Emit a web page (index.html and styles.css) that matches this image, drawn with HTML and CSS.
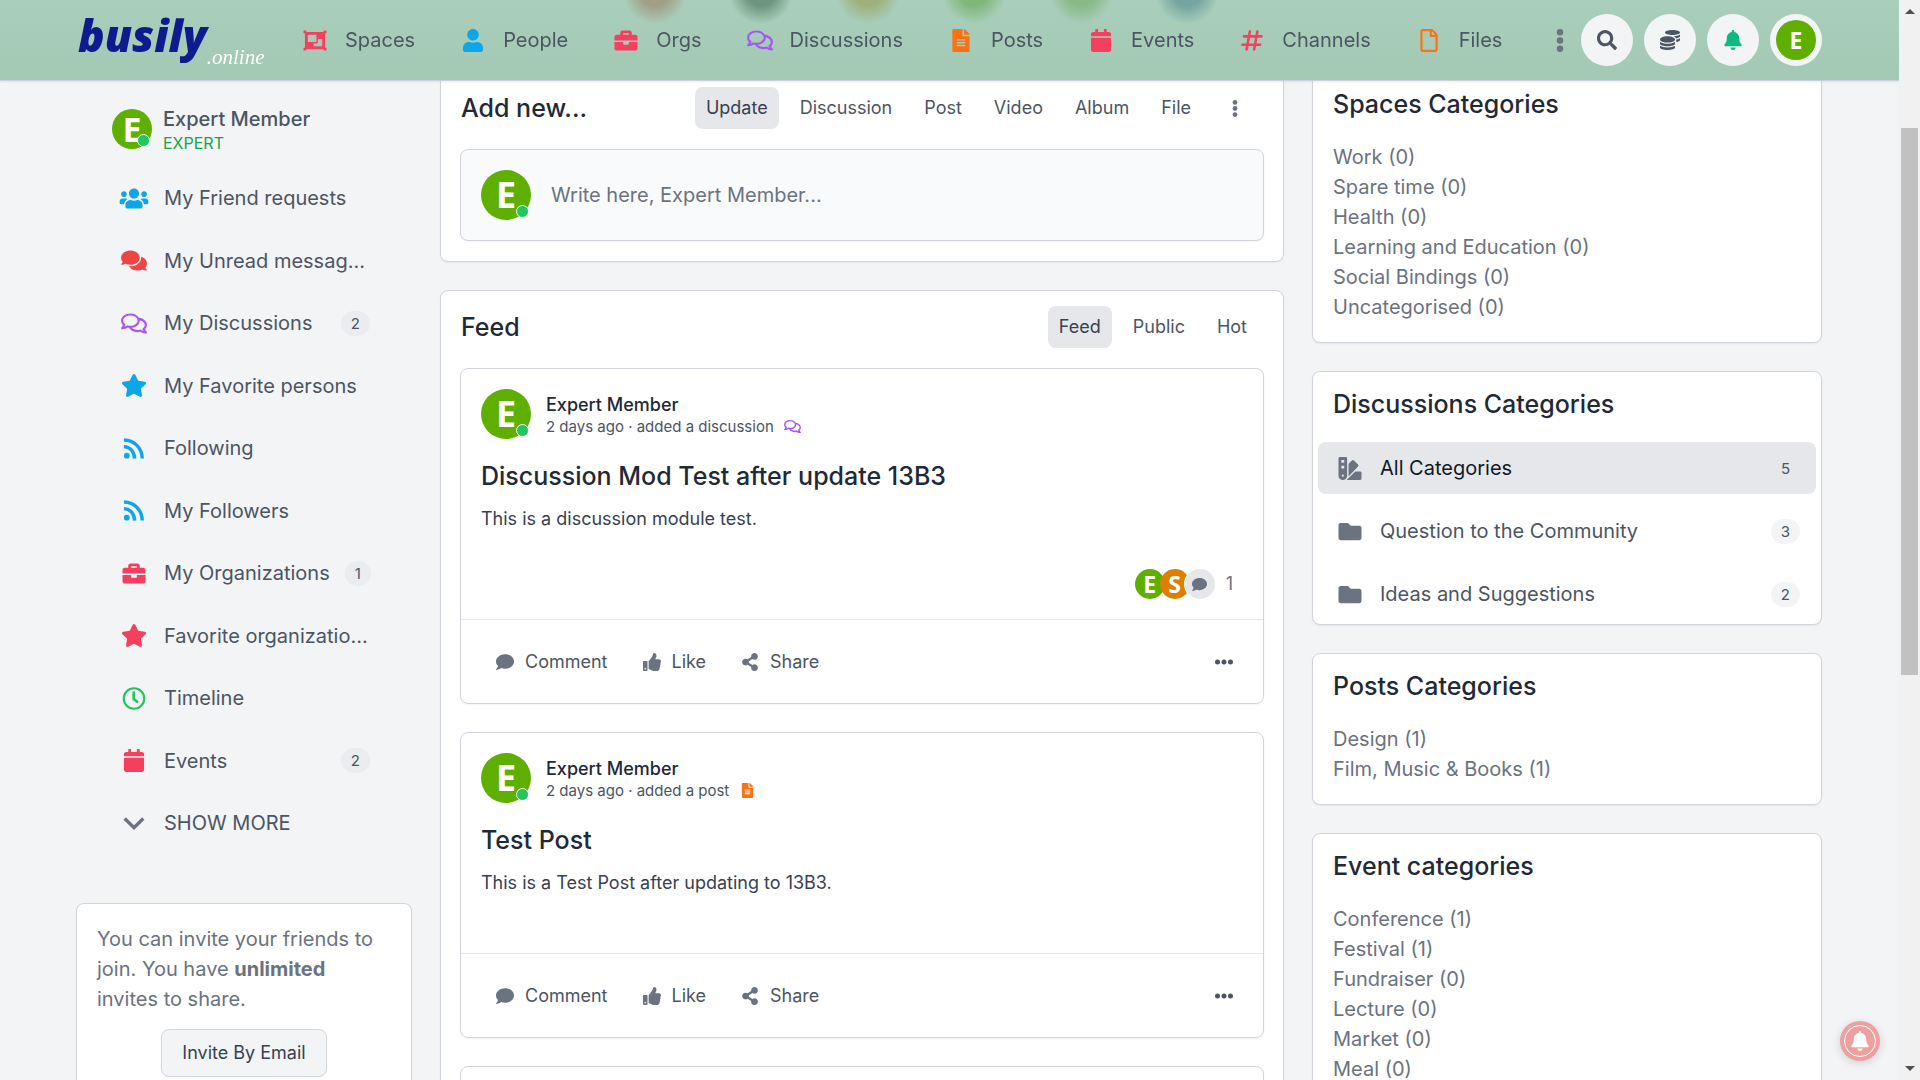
FILE: index.html
```html
<!DOCTYPE html>
<html lang="en">
<head>
<meta charset="UTF-8">
<meta name="viewport" content="width=device-width, initial-scale=1.0"/>
<title>Busily</title>
<link rel="stylesheet" href="styles.css">
</head>
<body>

<!-- icon set -->
<svg class="sprite" aria-hidden="true">
<symbol id="i-spaces" viewBox="0 0 512 512"><path d="M480 128V96h20c6.627 0 12-5.373 12-12V44c0-6.627-5.373-12-12-12h-40c-6.627 0-12 5.373-12 12v20H64V44c0-6.627-5.373-12-12-12H12C5.373 32 0 37.373 0 44v40c0 6.627 5.373 12 12 12h20v320H12c-6.627 0-12 5.373-12 12v40c0 6.627 5.373 12 12 12h40c6.627 0 12-5.373 12-12v-20h384v20c0 6.627 5.373 12 12 12h40c6.627 0 12-5.373 12-12v-40c0-6.627-5.373-12-12-12h-20V128zM96 276V140c0-6.627 5.373-12 12-12h168c6.627 0 12 5.373 12 12v136c0 6.627-5.373 12-12 12H108c-6.627 0-12-5.373-12-12zm320 96c0 6.627-5.373 12-12 12H236c-6.627 0-12-5.373-12-12v-52h72c13.255 0 24-10.745 24-24v-72h84c6.627 0 12 5.373 12 12v136z"/></symbol>
<symbol id="i-user" viewBox="0 0 448 512"><path d="M224 256c70.7 0 128-57.3 128-128S294.700 0 224 0 96 57.300 96 128s57.300 128 128 128zm89.600 32h-16.700c-22.200 10.200-46.900 16-72.900 16s-50.600-5.800-72.900-16h-16.700C60.200 288 0 348.200 0 422.400V464c0 26.500 21.500 48 48 48h352c26.500 0 48-21.500 48-48v-41.600c0-74.200-60.200-134.400-134.400-134.400z"/></symbol>
<symbol id="i-briefcase" viewBox="0 0 512 512"><path d="M320 336c0 8.840-7.160 16-16 16h-96c-8.840 0-16-7.160-16-16v-48H0v144c0 25.600 22.400 48 48 48h416c25.600 0 48-22.400 48-48V288H320v48zm144-208h-80V80c0-25.600-22.400-48-48-48H176c-25.600 0-48 22.400-48 48v48H48c-25.600 0-48 22.400-48 48v80h512v-80c0-25.600-22.400-48-48-48zm-144 0H192V96h128v32z"/></symbol>
<symbol id="i-talk" viewBox="0 0 576 512"><path d="M532 386.200c27.500-27.100 44-61.100 44-98.200 0-80-76.500-146.100-176.200-157.900C368.300 72.500 294.300 32 208 32 93.100 32 0 103.600 0 192c0 37 16.500 71 44 98.200-15.300 30.700-37.300 54.500-37.700 54.900-6.300 6.700-8.100 16.500-4.400 25 3.600 8.500 12 14 21.200 14 53.500 0 96.700-20.200 125.200-38.800 9.200 2.100 18.700 3.700 28.400 4.900C208.100 407.600 281.800 448 368 448c20.800 0 40.800-2.400 59.800-6.800C456.300 459.700 499.400 480 553 480c9.200 0 17.500-5.500 21.200-14 3.600-8.500 1.900-18.300-4.400-25-.4-.3-22.500-24.100-37.800-54.800zm-392.800-92.300L122.100 305c-14.100 9.100-28.500 16.300-43.100 21.400 2.700-4.700 5.400-9.700 8-14.800l15.500-31.100L77.700 256C64.200 242.600 48 220.700 48 192c0-60.700 73.300-112 160-112s160 51.300 160 112-73.300 112-160 112c-16.500 0-33-1.900-49-5.600l-19.800-4.500zM498.300 352l-24.700 24.400 15.500 31.100c2.600 5.100 5.300 10.100 8 14.800-14.600-5.100-29-12.300-43.100-21.400l-17.100-11.100-19.900 4.600c-16 3.700-32.500 5.600-49 5.600-54 0-102.200-20.100-131.300-49.700C338 339.500 416 272.900 416 192c0-3.400-.4-6.700-.7-10C479.700 196.500 528 238.800 528 288c0 28.700-16.200 50.600-29.700 64z"/></symbol>
<symbol id="i-messages" viewBox="0 0 576 512"><path d="M416 192c0-88.400-93.100-160-208-160S0 103.600 0 192c0 34.300 14.100 65.900 38 92-13.400 30.200-35.500 54.200-35.800 54.500-2.200 2.300-2.800 5.700-1.500 8.700S4.800 352 8 352c36.600 0 66.900-12.300 88.700-25 32.200 15.700 70.300 25 111.300 25 114.900 0 208-71.600 208-160zm122 220c23.900-26 38-57.700 38-92 0-66.900-53.500-124.200-129.300-148.100.9 6.600 1.300 13.300 1.300 20.100 0 105.900-107.700 192-240 192-10.800 0-21.300-.8-31.700-1.900C207.800 439.600 281.800 480 368 480c41 0 79.100-9.200 111.300-25 21.800 12.700 52.100 25 88.700 25 3.200 0 6.100-1.900 7.300-4.800 1.300-2.900.7-6.300-1.500-8.700-.3-.3-22.400-24.200-35.800-54.500z"/></symbol>
<symbol id="i-post" viewBox="0 0 384 512"><path d="M224 136V0H24C10.700 0 0 10.700 0 24v464c0 13.300 10.700 24 24 24h336c13.300 0 24-10.700 24-24V160H248c-13.200 0-24-10.800-24-24zm64 236c0 6.600-5.400 12-12 12H108c-6.600 0-12-5.400-12-12v-8c0-6.600 5.400-12 12-12h168c6.600 0 12 5.400 12 12v8zm0-64c0 6.600-5.400 12-12 12H108c-6.600 0-12-5.400-12-12v-8c0-6.600 5.400-12 12-12h168c6.600 0 12 5.400 12 12v8zm0-72v8c0 6.600-5.400 12-12 12H108c-6.600 0-12-5.400-12-12v-8c0-6.600 5.400-12 12-12h168c6.600 0 12 5.400 12 12zm96-114.100v6.100H256V0h6.100c6.400 0 12.500 2.500 17 7l97.900 98c4.500 4.500 7 10.600 7 16.900z"/></symbol>
<symbol id="i-calendar" viewBox="0 0 448 512"><path d="M12 192h424c6.600 0 12 5.400 12 12v260c0 26.500-21.500 48-48 48H48c-26.500 0-48-21.500-48-48V204c0-6.600 5.400-12 12-12zm436-44v-36c0-26.500-21.500-48-48-48h-48V12c0-6.600-5.400-12-12-12h-40c-6.600 0-12 5.400-12 12v52H160V12c0-6.600-5.400-12-12-12h-40c-6.600 0-12 5.400-12 12v52H48C21.500 64 0 85.500 0 112v36c0 6.600 5.400 12 12 12h424c6.600 0 12-5.400 12-12z"/></symbol>
<symbol id="i-hash" viewBox="0 0 448 512"><path d="M176 56 104 456M344 56 272 456M44 164H436M12 348H404" fill="none" stroke="currentColor" stroke-width="56" stroke-linecap="round"/></symbol>
<symbol id="i-file" viewBox="0 0 384 512"><path d="M369.900 97.900L286 14C277 5 264.800 0 252.100 0H48C21.500 0 0 21.500 0 48v416c0 26.500 21.500 48 48 48h288c26.500 0 48-21.500 48-48V131.900c0-12.700-5.100-25-14.100-34zM332.100 128H256V51.900l76.100 76.100zM48 464V48h160v104c0 13.300 10.700 24 24 24h104v288H48z"/></symbol>
<symbol id="i-vdots" viewBox="0 0 192 512"><circle cx="96" cy="72" r="72"/><circle cx="96" cy="256" r="72"/><circle cx="96" cy="440" r="72"/></symbol>
<symbol id="i-hdots" viewBox="0 0 512 192"><circle cx="72" cy="96" r="72"/><circle cx="256" cy="96" r="72"/><circle cx="440" cy="96" r="72"/></symbol>
<symbol id="i-search" viewBox="0 0 512 512"><path d="M505 442.700L405.300 343c-4.500-4.500-10.600-7-17-7H372c27.600-35.300 44-79.700 44-128C416 93.100 322.900 0 208 0S0 93.100 0 208s93.100 208 208 208c48.300 0 92.700-16.400 128-44v16.300c0 6.400 2.500 12.500 7 17l99.700 99.700c9.400 9.400 24.600 9.400 33.900 0l28.300-28.300c9.400-9.400 9.400-24.600.1-34zM208 336c-70.700 0-128-57.200-128-128 0-70.700 57.200-128 128-128 70.700 0 128 57.200 128 128 0 70.700-57.200 128-128 128z"/></symbol>
<symbol id="i-coins" viewBox="0 0 512 512"><path d="M0 405.300V448c0 35.300 86 64 192 64s192-28.700 192-64v-42.700C342.700 434.400 267.200 448 192 448S41.300 434.400 0 405.300zM320 128c106 0 192-28.700 192-64S426 0 320 0 128 28.700 128 64s86 64 192 64zM0 300.400V352c0 35.300 86 64 192 64s192-28.700 192-64v-51.600c-41.300 34-116.900 51.600-192 51.600S41.300 334.400 0 300.400zm416 11c57.300-11.100 96-31.700 96-55.400v-42.700c-23.200 16.400-57.300 27.600-96 34.500v63.600zM192 160C86 160 0 195.800 0 240s86 80 192 80 192-35.800 192-80-86-80-192-80zm219.300 56.300c60-10.800 100.700-32 100.700-56.300v-42.700c-35.500 25.100-96.500 38.600-160.700 41.800 29.500 14.300 51.200 33.500 60 57.200z"/></symbol>
<symbol id="i-bell" viewBox="0 0 448 512"><path d="M224 512c35.320 0 63.970-28.650 63.970-64H160.030c0 35.350 28.650 64 63.970 64zm215.390-149.710c-19.320-20.760-55.470-51.990-55.470-154.290 0-77.700-54.480-139.900-127.940-155.160V32c0-17.670-14.320-32-31.980-32s-31.980 14.330-31.980 32v20.840C118.560 68.100 64.080 130.300 64.080 208c0 102.300-36.150 133.530-55.470 154.290-6 6.450-8.660 14.160-8.610 21.710.11 16.400 12.980 32 32.100 32h383.800c19.120 0 32-15.600 32.100-32 .05-7.550-2.610-15.270-8.610-21.710z"/></symbol>
<symbol id="i-users" viewBox="0 0 640 512"><path d="M96 224c35.300 0 64-28.700 64-64s-28.700-64-64-64-64 28.700-64 64 28.700 64 64 64zm448 0c35.300 0 64-28.700 64-64s-28.700-64-64-64-64 28.700-64 64 28.700 64 64 64zm32 32h-64c-17.600 0-33.500 7.100-45.100 18.600 40.300 22.100 68.900 62 75.100 109.400h66c17.700 0 32-14.300 32-32v-32c0-35.300-28.700-64-64-64zm-256 0c61.900 0 112-50.100 112-112S381.900 32 320 32 208 82.100 208 144s50.100 112 112 112zm76.800 32h-8.300c-20.800 10-43.900 16-68.500 16s-47.600-6-68.500-16h-8.300C179.600 288 128 339.600 128 403.200V432c0 26.500 21.500 48 48 48h288c26.500 0 48-21.500 48-48v-28.800c0-63.600-51.600-115.200-115.200-115.200zm-223.700-13.400C161.500 263.100 145.600 256 128 256H64c-35.300 0-64 28.700-64 64v32c0 17.700 14.300 32 32 32h65.900c6.300-47.400 34.900-87.300 75.200-109.400z"/></symbol>
<symbol id="i-star" viewBox="0 0 576 512"><path d="M259.300 17.800L194 150.200 47.900 171.500c-26.200 3.800-36.700 36.100-17.700 54.600l105.700 103-25 145.500c-4.500 26.300 23.200 46 46.400 33.700L288 439.600l130.700 68.700c23.200 12.200 50.900-7.400 46.400-33.700l-25-145.500 105.700-103c19-18.500 8.500-50.800-17.700-54.600L382 150.200 316.700 17.800c-11.700-23.600-45.600-23.900-57.400 0z"/></symbol>
<symbol id="i-rss" viewBox="0 0 448 512"><circle cx="64" cy="416" r="64"/><path d="M0 214c132 4 230 104 238 266M0 68c232 4 400 176 408 412" fill="none" stroke="currentColor" stroke-width="76"/></symbol>
<symbol id="i-clock" viewBox="0 0 512 512"><circle cx="256" cy="256" r="228" fill="none" stroke="currentColor" stroke-width="48"/><path d="M250 126V272L328 328" fill="none" stroke="currentColor" stroke-width="60" stroke-linecap="round" stroke-linejoin="round"/></symbol>
<symbol id="i-down" viewBox="0 0 448 512"><path d="M44 172 224 348 404 172" fill="none" stroke="currentColor" stroke-width="76" stroke-linecap="square"/></symbol>
<symbol id="i-folder" viewBox="0 0 512 512"><path d="M464 128H272l-64-64H48C21.500 64 0 85.500 0 112v288c0 26.500 21.500 48 48 48h416c26.500 0 48-21.500 48-48V176c0-26.500-21.500-48-48-48z"/></symbol>
<symbol id="i-swatch" viewBox="0 0 512 512"><path d="M434.700 167.700 344.500 77.400a31.800 31.800 0 0 0-45 0L224 153V435.100L434.700 212.700a32 32 0 0 0 0-45zM480 320H373.100L186.700 506.500c-2 2-4.300 3.500-6.400 5.500H480a32 32 0 0 0 32-32V352a32 32 0 0 0-32-32zM192 32a32 32 0 0 0-32-32H32A32 32 0 0 0 0 32v384a96 96 0 0 0 192 0zM96 440a24 24 0 1 1 24-24 24 24 0 0 1-24 24zm32-184H64v-64h64zm0-128H64V64h64z"/></symbol>
<symbol id="i-comment" viewBox="0 0 512 512"><path d="M256 32C114.600 32 0 125.100 0 240c0 49.600 21.400 95 57 130.700C44.500 421.100 2.700 466 2.200 466.500c-2.200 2.300-2.800 5.700-1.500 8.700S4.800 480 8 480c66.300 0 116-31.800 140.600-51.400 32.700 12.300 69 19.400 107.400 19.400 141.400 0 256-93.100 256-208S397.400 32 256 32z"/></symbol>
<symbol id="i-like" viewBox="0 0 512 512"><path d="M104 224H24c-13.255 0-24 10.745-24 24v240c0 13.255 10.745 24 24 24h80c13.255 0 24-10.745 24-24V248c0-13.255-10.745-24-24-24zM64 472c-13.255 0-24-10.745-24-24s10.745-24 24-24 24 10.745 24 24-10.745 24-24 24zM384 81.452c0 42.416-25.970 66.208-33.277 94.548h101.723c33.397 0 59.397 27.746 59.553 58.098.084 17.938-7.546 37.249-19.439 49.197l-.11.11c9.836 23.337 8.237 56.037-9.308 79.469 8.681 25.895-.069 57.704-16.382 74.757 4.298 17.598 2.244 32.575-6.148 44.632C440.202 511.587 389.616 512 346.839 512l-2.845-.001c-48.287-.017-87.806-17.598-119.560-31.725-15.957-7.099-36.821-15.887-52.651-16.178-6.540-.12-11.783-5.457-11.783-11.998v-213.770c0-3.200 1.282-6.271 3.558-8.521 39.614-39.144 56.648-80.587 89.117-113.111 14.804-14.832 20.188-37.236 25.393-58.902C282.515 39.293 291.817 0 312 0c24 0 72 8 72 81.452z"/></symbol>
<symbol id="i-share" viewBox="0 0 448 512"><path d="M352 320c-22.608 0-43.387 7.819-59.790 20.895l-102.486-64.054a96.551 96.551 0 0 0 0-41.683l102.486-64.054C308.613 184.181 329.392 192 352 192c53.019 0 96-42.981 96-96S405.019 0 352 0s-96 42.981-96 96c0 7.158.79 14.130 2.276 20.841L155.790 180.895C139.387 167.819 118.608 160 96 160c-53.019 0-96 42.981-96 96s42.981 96 96 96c22.608 0 43.387-7.819 59.790-20.895l102.486 64.054A96.301 96.301 0 0 0 256 416c0 53.019 42.981 96 96 96s96-42.981 96-96-42.981-96-96-96z"/></symbol>
</svg>

<header class="topbar">
<a class="logo" href="#"><span class="logo-name">busily</span><span class="logo-tld">.online</span></a>
<nav class="mainnav">
<a href="#"><svg class="icon rose"><use href="#i-spaces"/></svg>Spaces</a>
<a href="#"><svg class="icon sky"><use href="#i-user"/></svg>People</a>
<a href="#"><svg class="icon rose"><use href="#i-briefcase"/></svg>Orgs</a>
<a href="#"><svg class="icon purple"><use href="#i-talk"/></svg>Discussions</a>
<a href="#"><svg class="icon orange"><use href="#i-post"/></svg>Posts</a>
<a href="#"><svg class="icon rose"><use href="#i-calendar"/></svg>Events</a>
<a href="#"><svg class="icon rose"><use href="#i-hash"/></svg>Channels</a>
<a href="#"><svg class="icon orange"><use href="#i-file"/></svg>Files</a>
<button class="plain" aria-label="More"><svg class="icon gray"><use href="#i-vdots"/></svg></button>
</nav>
<div class="tools">
<button class="round" aria-label="Search"><svg class="icon small"><use href="#i-search"/></svg></button>
<button class="round" aria-label="Credits"><svg class="icon small"><use href="#i-coins"/></svg></button>
<button class="round" aria-label="Notifications"><svg class="icon small emerald"><use href="#i-bell"/></svg></button>
<button class="round" aria-label="Account"><span class="avatar account">E</span></button>
</div>
</header>

<main class="page">

<aside class="left">
<a class="profile" href="#">
<span class="avatar mid">E<i class="online"></i></span>
<span class="who"><b>Expert Member</b><small>EXPERT</small></span>
</a>
<nav class="sidemenu">
<a href="#"><svg class="icon sky"><use href="#i-users"/></svg><span>My Friend requests</span></a>
<a href="#"><svg class="icon red"><use href="#i-messages"/></svg><span>My Unread messag...</span></a>
<a href="#"><svg class="icon purple"><use href="#i-talk"/></svg><span>My Discussions</span><em class="badge">2</em></a>
<a href="#"><svg class="icon sky"><use href="#i-star"/></svg><span>My Favorite persons</span></a>
<a href="#"><svg class="icon sky"><use href="#i-rss"/></svg><span>Following</span></a>
<a href="#"><svg class="icon sky"><use href="#i-rss"/></svg><span>My Followers</span></a>
<a href="#"><svg class="icon rose"><use href="#i-briefcase"/></svg><span>My Organizations</span><em class="badge">1</em></a>
<a href="#"><svg class="icon rose"><use href="#i-star"/></svg><span>Favorite organizatio...</span></a>
<a href="#"><svg class="icon green"><use href="#i-clock"/></svg><span>Timeline</span></a>
<a href="#"><svg class="icon rose"><use href="#i-calendar"/></svg><span>Events</span><em class="badge">2</em></a>
<a href="#"><svg class="icon gray"><use href="#i-down"/></svg><span>SHOW MORE</span></a>
</nav>
<section class="card invite">
<p>You can invite your friends to join. You have <b>unlimited</b> invites to share.</p>
<button class="btn">Invite By Email</button>
</section>
</aside>

<div class="center">
<section class="card block">
<div class="head">
<h2>Add new...</h2>
<div class="tabs">
<button class="tab active">Update</button>
<button class="tab">Discussion</button>
<button class="tab">Post</button>
<button class="tab">Video</button>
<button class="tab">Album</button>
<button class="tab">File</button>
<button class="tab" aria-label="More"><svg class="icon dots gray"><use href="#i-vdots"/></svg></button>
</div>
</div>
<div class="composer">
<span class="avatar">E<i class="online"></i></span>
<input type="text" aria-label="New update" placeholder="Write here, Expert Member...">
</div>
</section>

<section class="card block">
<div class="head">
<h2>Feed</h2>
<div class="tabs">
<button class="tab active">Feed</button>
<button class="tab">Public</button>
<button class="tab">Hot</button>
</div>
</div>

<div class="posts">
<article class="post">
<div class="content">
<div class="author">
<span class="avatar">E<i class="online"></i></span>
<div class="meta"><b>Expert Member</b><small>2 days ago · added a discussion <svg class="icon kind purple"><use href="#i-talk"/></svg></small></div>
</div>
<h3>Discussion Mod Test after update 13B3</h3>
<p>This is a discussion module test.</p>
<div class="replies">
<span class="avatar tiny">E</span><span class="avatar tiny amber">S</span><span class="avatar tiny note"><svg class="icon"><use href="#i-comment"/></svg></span>
<span class="count">1</span>
</div>
</div>
<div class="actions">
<button><svg class="icon"><use href="#i-comment"/></svg>Comment</button>
<button><svg class="icon"><use href="#i-like"/></svg>Like</button>
<button><svg class="icon"><use href="#i-share"/></svg>Share</button>
<button class="more" aria-label="More"><svg class="icon"><use href="#i-hdots"/></svg></button>
</div>
</article>

<article class="post">
<div class="content">
<div class="author">
<span class="avatar">E<i class="online"></i></span>
<div class="meta"><b>Expert Member</b><small>2 days ago · added a post <svg class="icon kind orange"><use href="#i-post"/></svg></small></div>
</div>
<h3>Test Post</h3>
<p>This is a Test Post after updating to 13B3.</p>
</div>
<div class="actions">
<button><svg class="icon"><use href="#i-comment"/></svg>Comment</button>
<button><svg class="icon"><use href="#i-like"/></svg>Like</button>
<button><svg class="icon"><use href="#i-share"/></svg>Share</button>
<button class="more" aria-label="More"><svg class="icon"><use href="#i-hdots"/></svg></button>
</div>
</article>

<article class="post">
<div class="content"></div>
</article>
</div>
</section>
</div>

<aside class="right">
<section class="card cats">
<h2>Spaces Categories</h2>
<ul>
<li><a href="#">Work</a> (0)</li>
<li><a href="#">Spare time</a> (0)</li>
<li><a href="#">Health</a> (0)</li>
<li><a href="#">Learning and Education</a> (0)</li>
<li><a href="#">Social Bindings</a> (0)</li>
<li><a href="#">Uncategorised</a> (0)</li>
</ul>
</section>

<section class="card cats">
<h2>Discussions Categories</h2>
<nav class="folders">
<a class="active" href="#"><svg class="icon gray"><use href="#i-swatch"/></svg><span>All Categories</span><em class="badge">5</em></a>
<a href="#"><svg class="icon gray"><use href="#i-folder"/></svg><span>Question to the Community</span><em class="badge">3</em></a>
<a href="#"><svg class="icon gray"><use href="#i-folder"/></svg><span>Ideas and Suggestions</span><em class="badge">2</em></a>
</nav>
</section>

<section class="card cats">
<h2>Posts Categories</h2>
<ul>
<li><a href="#">Design</a> (1)</li>
<li><a href="#">Film, Music &amp; Books</a> (1)</li>
</ul>
</section>

<section class="card cats">
<h2>Event categories</h2>
<ul>
<li><a href="#">Conference</a> (1)</li>
<li><a href="#">Festival</a> (1)</li>
<li><a href="#">Fundraiser</a> (0)</li>
<li><a href="#">Lecture</a> (0)</li>
<li><a href="#">Market</a> (0)</li>
<li><a href="#">Meal</a> (0)</li>
</ul>
</section>
</aside>

</main>

<button class="fab" aria-label="Subscribe to notifications"><span><svg class="icon"><use href="#i-bell"/></svg></span></button>

<div class="scrollbar" aria-hidden="true">
<i class="up"></i>
<i class="thumb"></i>
<i class="down"></i>
</div>

</body>
</html>
```
FILE: styles.css
```css
*{
box-sizing: border-box;
margin: 0; padding: 0;
}

body{
height: 100vh;
overflow: hidden;
background: #f3f4f6;
color: #4b5563;
font: 400 20px/30px Inter, "Liberation Sans", sans-serif;
font-optical-sizing: none;
}

a{
color: inherit;
text-decoration: none;
}

ul{
list-style: none;
}

button,input{
font: inherit;
font-optical-sizing: none;
color: inherit;
background: none;
border: none;
}

button{
cursor: pointer;
}

h2,h3{
color: #1f2937;
font-size: 25px;
font-weight: 500;
line-height: 36px;
}

.sprite{
position: absolute;
width: 0; height: 0;
}

.icon{
width: 30px; height: 23px;
flex: none;
fill: currentColor;
}

.rose{color: #f43f5e;}
.sky{color: #0ea5e9;}
.purple{color: #a855f7;}
.orange{color: #f97316;}
.red{color: #ef4444;}
.green{color: #22c55e;}
.emerald{color: #10b981;}
.gray{color: #6b7280;}

/*--------- header ---------*/
.topbar{
position: fixed;
top: 0; left: 0; right: 21px;
z-index: 5;
height: 81px;
padding: 0 77px 0 78px;
display: flex;
align-items: center;
border-bottom: 1px solid #cbcfd8;
box-shadow: 0 1px 2px rgba(0,0,0,.08);
background:
radial-gradient(circle at 655px -8px, #9fa085 14px, transparent 32px),
radial-gradient(circle at 761px -8px, #6d967e 14px, transparent 32px),
radial-gradient(circle at 868px -8px, #9fb07d 14px, transparent 32px),
radial-gradient(circle at 974px -8px, #80b87b 14px, transparent 32px),
radial-gradient(circle at 1081px -8px, #88b987 14px, transparent 32px),
radial-gradient(circle at 1187px -8px, #74a5a1 14px, transparent 32px),
linear-gradient(#a9cebb, #a3c9b4);
}

.logo{
display: flex;
align-items: flex-start;
width: 222px;
height: 80px;
}

.logo-name{
color: #101a8f;
font: italic 800 44px/70px "Open Sans", sans-serif;
}

.logo-tld{
padding-top: 45px;
color: #fff;
font: italic 400 21px/24px "Liberation Serif", serif;
}

.mainnav{
display: flex;
gap: 43px;
}

.mainnav a{
display: flex;
align-items: center;
gap: 15px;
}

.plain{
display: flex;
align-items: center;
}

.tools{
display: flex;
gap: 11px;
margin-left: auto;
}

.round{
width: 52px; height: 52px;
border-radius: 50%;
background: #f3f4f6;
display: flex;
align-items: center;
justify-content: center;
}

.small{
width: 20px; height: 20px;
}

/*--------- avatars ---------*/
.avatar{
position: relative;
flex: none;
width: 50px; height: 50px;
border-radius: 50%;
background: #5eaf00;
color: #fff;
display: flex;
align-items: center;
justify-content: center;
font: 700 36px/50px "Open Sans", sans-serif;
}

.avatar.mid{
width: 40px; height: 40px;
font-size: 34px;
line-height: 40px;
}

.avatar.account{
width: 40px; height: 40px;
font-size: 23px;
line-height: 40px;
}

.avatar.tiny{
width: 30px; height: 30px;
font-size: 23px;
line-height: 30px;
}

.tiny+.tiny{
margin-left: -5px;
}

.avatar.amber{
background: #db8000;
}

.avatar.note{
background: #e5e7eb;
color: #6b7280;
box-shadow: 0 0 0 1px #fff;
}

.note .icon{
width: 15px; height: 15px;
}

.online{
position: absolute;
right: 2px; bottom: 2px;
width: 13px; height: 13px;
border: 1px solid #fff;
border-radius: 50%;
background: #22c55e;
}

/*--------- layout ---------*/
.page{
margin-right: 21px;
padding: 71px 77px 0 76px;
display: grid;
grid-template-columns: 336px minmax(0,1fr) 510px;
gap: 28px;
align-items: start;
}

.center,.right{
display: flex;
flex-direction: column;
gap: 28px;
}

.card{
background: #fff;
border: 1px solid #d1d5db;
border-radius: 8px;
box-shadow: 0 1px 2px rgba(0,0,0,.06);
}

/*--------- left ---------*/
.left{
padding-top: 34px;
}

.profile{
display: flex;
align-items: center;
gap: 11px;
height: 48px;
padding-left: 36px;
}

.who{
display: flex;
flex-direction: column;
padding-top: 2px;
}

.who b{
font-weight: 500;
line-height: 26px;
}

.who small{
color: #16a34a;
font-size: 16px;
line-height: 22px;
}

.sidemenu{
display: flex;
flex-direction: column;
justify-content: space-between;
height: 677px;
margin: 19px 0 54px;
padding: 0 42px 0 43px;
}

.sidemenu a{
display: flex;
align-items: center;
gap: 15px;
height: 52px;
}

.sidemenu span,.folders span{
flex: 1;
white-space: nowrap;
}

.badge{
padding: 0 10px;
border-radius: 13px;
background: #ebecf0;
font-size: 15px;
font-style: normal;
line-height: 25px;
}

.invite{
padding: 20px;
color: #6b7280;
text-align: center;
}

.invite p{
margin-bottom: 15px;
text-align: left;
}

.btn{
height: 48px;
padding: 0 20px;
border: 1px solid #d1d5db;
border-radius: 8px;
background: #f3f4f6;
color: #374151;
font-size: 18px;
}

/*--------- center ---------*/
.block{
padding: 0 19px 20px;
}

.head{
display: flex;
align-items: center;
justify-content: space-between;
padding: 15px 6px 20px 1px;
}

.tabs{
display: flex;
gap: 10px;
}

.tab{
display: flex;
align-items: center;
height: 42px;
padding: 0 11px;
border-radius: 8px;
font-size: 18px;
}

.tab.active{
background: #e5e7eb;
color: #374151;
}

.dots{
width: 24px; height: 17px;
}

.composer{
display: flex;
align-items: center;
gap: 20px;
padding: 20px;
border: 1px solid #d1d5db;
border-radius: 8px;
background: #f9fafb;
box-shadow: 0 1px 2px rgba(0,0,0,.05);
}

.composer input{
flex: 1;
outline: none;
}

.composer input::placeholder{
color: #6b7280;
}

.posts{
display: flex;
flex-direction: column;
gap: 28px;
}

.post{
border: 1px solid #d1d5db;
border-radius: 8px;
box-shadow: 0 1px 2px rgba(0,0,0,.05);
}

.content{
padding: 20px;
}

.author{
display: flex;
align-items: center;
gap: 15px;
margin-bottom: 19px;
}

.meta{
display: flex;
flex-direction: column;
padding-top: 3px;
}

.meta b{
color: #1f2937;
font-size: 18px;
font-weight: 500;
line-height: 22px;
}

.meta small{
display: flex;
align-items: center;
font-size: 15px;
line-height: 22px;
}

.kind{
width: 17px; height: 15px;
margin-left: 10px;
}

.content h3{
margin-bottom: 12px;
}

.content p{
color: #374151;
font-size: 18px;
line-height: 26px;
margin-bottom: 37px;
}

.replies{
display: flex;
align-items: center;
justify-content: flex-end;
padding-right: 10px;
}

.count{
margin-left: 11px;
color: #6b7280;
font-size: 18px;
}

.actions{
display: flex;
align-items: center;
gap: 34px;
height: 84px;
padding: 0 30px 0 34px;
border-top: 1px solid #e5e7eb;
font-size: 18px;
}

.actions button{
display: flex;
align-items: center;
gap: 10px;
}

.actions .icon{
width: 20px; height: 18px;
color: #6b7280;
}

.actions .more{
margin-left: auto;
}

.more .icon{
width: 18px;
color: #4b5563;
}

/*--------- right ---------*/
.cats h2{
padding: 14px 20px 20px;
}

.cats ul{
padding: 0 20px 20px;
color: #6b7280;
}

.folders{
display: flex;
flex-direction: column;
gap: 11px;
padding: 0 5px 4px;
}

.folders a{
display: flex;
align-items: center;
gap: 15px;
height: 52px;
padding: 0 16px 0 17px;
border-radius: 8px;
}

.folders .active{
background: #e5e7eb;
color: #111827;
}

.folders .badge{
background: #f3f4f6;
color: #4b5563;
}

.folders .active .badge{
background: none;
}

/*--------- overlays ---------*/
.fab{
position: fixed;
right: 40px; bottom: 19px;
z-index: 6;
width: 40px; height: 40px;
padding: 4px;
border-radius: 50%;
background: #eca0a0;
color: #fff;
box-shadow: 0 2px 10px rgba(0,0,0,.15);
}

.fab span{
display: flex;
align-items: center;
justify-content: center;
height: 32px;
border: 1px solid #fff;
border-radius: 50%;
}

.fab .icon{
width: 20px; height: 20px;
}

.scrollbar{
position: fixed;
top: 0; right: 0; bottom: 0;
z-index: 6;
width: 21px;
padding: 9px 2px;
background: #f1f1f1;
display: flex;
flex-direction: column;
align-items: center;
}

.up,.down{
border: 5px solid transparent;
}

.up{
border-top: none;
border-bottom-color: #505050;
}

.down{
border-bottom: none;
border-top-color: #505050;
}

.thumb{
width: 17px; height: 547px;
margin: 114px 0 auto;
background: #c1c1c1;
}
```
